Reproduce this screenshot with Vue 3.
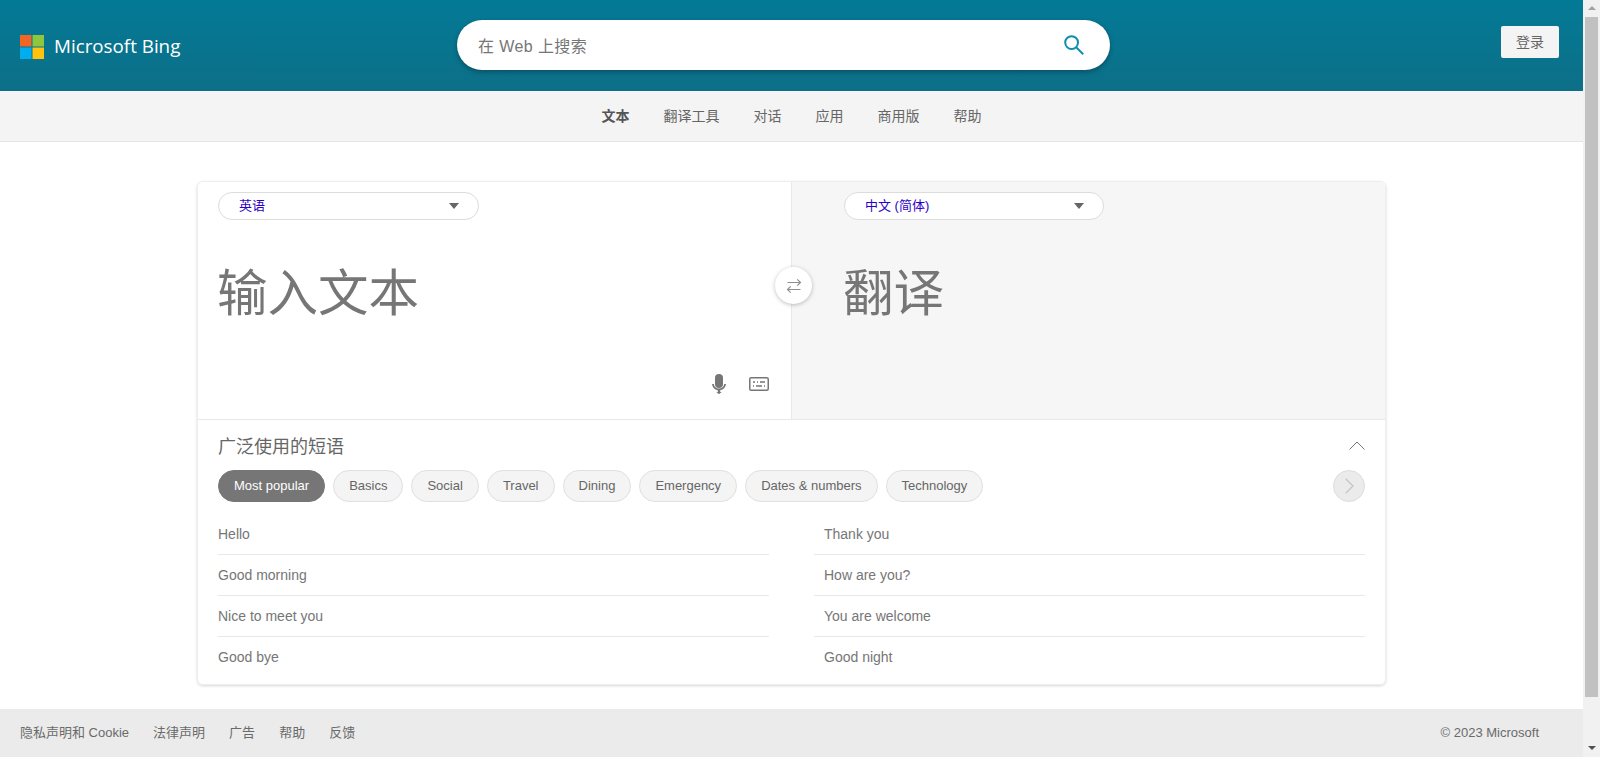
<script setup>
const navItems = ['文本', '翻译工具', '对话', '应用', '商用版', '帮助']
const chips = ['Most popular', 'Basics', 'Social', 'Travel', 'Dining', 'Emergency', 'Dates & numbers', 'Technology']
const leftPhrases = ['Hello', 'Good morning', 'Nice to meet you', 'Good bye']
const rightPhrases = ['Thank you', 'How are you?', 'You are welcome', 'Good night']
const footerLinks = ['隐私声明和 Cookie', '法律声明', '广告', '帮助', '反馈']
</script>

<template>
  <div class="window">
    <div class="page">
      <header class="header">
        <div class="brand">
          <svg class="logo" viewBox="0 0 24 24" width="24" height="24">
            <rect x="0" y="0" width="11.5" height="11.5" fill="#f26522" />
            <rect x="12.5" y="0" width="11.5" height="11.5" fill="#8dc63f" />
            <rect x="0" y="12.5" width="11.5" height="11.5" fill="#00aeef" />
            <rect x="12.5" y="12.5" width="11.5" height="11.5" fill="#ffc20e" />
          </svg>
          <span class="brand-name">Microsoft Bing</span>
        </div>
        <div class="search">
          <span class="search-text">在 Web 上搜索</span>
          <svg class="search-icon" viewBox="0 0 20 20" width="20" height="20" fill="none" stroke="#0e8fae" stroke-width="2">
            <circle cx="7.6" cy="7.6" r="6.4" />
            <path d="M12.2 12.2 19.2 19.2" />
          </svg>
        </div>
        <button class="login">登录</button>
      </header>

      <nav class="nav">
        <a v-for="(item, i) in navItems" :key="item" class="nav-item" :class="{ active: i === 0 }">{{ item }}</a>
      </nav>

      <main class="main">
        <section class="card">
          <div class="panels">
            <div class="panel source">
              <div class="lang">
                <span>英语</span>
                <i class="caret"></i>
              </div>
              <div class="big-text">输入文本</div>
              <div class="tools">
                <svg viewBox="0 0 14 20" width="14" height="20" fill="#767676">
                  <rect x="3" y="0" width="8" height="14" rx="4" />
                  <path d="M0 10h1.800c.3 2.800 2.300 4.500 5.200 4.500s4.900-1.700 5.200-4.500H14c-.3 3.400-2.600 5.700-5.800 6.200V18h1.500L7 20.200 4.300 18h1.500v-1.800C2.600 15.700.3 13.400 0 10z" />
                </svg>
                <svg viewBox="0 0 20 14" width="20" height="14" fill="none" stroke="#767676">
                  <rect x="0.75" y="0.75" width="18.500" height="12.500" rx="1.500" stroke-width="1.500" />
                  <path d="M4 5h2M8 5h1M11 5h5M4 9h1M7 9h6M15 9h1" stroke-width="1.500" />
                </svg>
              </div>
              <button class="swap">
                <svg viewBox="0 0 16 16" width="16" height="16" fill="none" stroke="#8f8f8f" stroke-width="1.200">
                  <path d="M1.500 4.500H14.500M11.300 1.300l3.200 3.200-3.200 3.200M14.500 11.500H1.500M4.700 8.300l-3.200 3.200 3.200 3.200" />
                </svg>
              </button>
            </div>
            <div class="panel target">
              <div class="lang">
                <span>中文 (简体)</span>
                <i class="caret"></i>
              </div>
              <div class="big-text">翻译</div>
            </div>
          </div>

          <div class="phrases">
            <div class="phrases-head">
              <h2 class="phrases-title">广泛使用的短语</h2>
              <svg viewBox="0 0 16 9" width="16" height="9" fill="none" stroke="#767676">
                <path d="M.5 8.500 8 1l7.500 7.500" />
              </svg>
            </div>
            <div class="chips-row">
              <div class="chips">
                <span v-for="(chip, i) in chips" :key="chip" class="chip" :class="{ selected: i === 0 }">{{ chip }}</span>
              </div>
              <button class="chip-next">
                <svg viewBox="0 0 9 16" width="9" height="16" fill="none" stroke="#c4c4c4" stroke-width="1.300">
                  <path d="M.7.700 8 8 .7 15.300" />
                </svg>
              </button>
            </div>
            <div class="phrase-cols">
              <ul class="phrase-list">
                <li v-for="p in leftPhrases" :key="p">{{ p }}</li>
              </ul>
              <ul class="phrase-list right">
                <li v-for="p in rightPhrases" :key="p">{{ p }}</li>
              </ul>
            </div>
          </div>
        </section>
      </main>

      <footer class="footer">
        <div class="footer-links">
          <a v-for="link in footerLinks" :key="link">{{ link }}</a>
        </div>
        <span class="copyright">© 2023 Microsoft</span>
      </footer>
    </div>

    <div class="scrollbar">
      <i class="arrow up"></i>
      <div class="thumb"></div>
      <i class="arrow down"></i>
    </div>
  </div>
</template>

<style scoped>
.window {
  display: flex;
  height: 757px;
  overflow: hidden;
  font-family: "Liberation Sans", "Noto Sans CJK SC", sans-serif;
  font-size: 14px;
  color: #666;
}

.page {
  flex: 1;
  min-width: 0;
  display: flex;
  flex-direction: column;
}

.header {
  height: 91px;
  flex: none;
  display: flex;
  align-items: flex-start;
  padding: 20px 24px 0 20px;
  box-sizing: border-box;
  background: linear-gradient(#037a97, #0d6f87);
}

.brand {
  width: 437px;
  flex: none;
  display: flex;
  align-items: center;
  margin-top: 15px;
  height: 24px;
}

.logo {
  flex: none;
}

.brand-name {
  margin: 0 0 2px 10px;
  font-family: "Open Sans", sans-serif;
  font-size: 18.8px;
  color: #fff;
}

.search {
  width: 653px;
  height: 50px;
  flex: none;
  display: flex;
  align-items: center;
  justify-content: space-between;
  padding: 0 26px 0 21px;
  box-sizing: border-box;
  background: #fff;
  border-radius: 25px;
  box-shadow: 0 2px 5px rgba(0, 0, 0, .3);
}

.search-text {
  font-size: 16px;
  letter-spacing: .4px;
  color: #767676;
}

.login {
  width: 58px;
  height: 32px;
  margin: 6px 0 0 auto;
  padding: 0 0 3px;
  border: none;
  border-radius: 2px;
  background: #f4f4f4;
  font: inherit;
  color: #666;
}

.nav {
  height: 51px;
  flex: none;
  box-sizing: border-box;
  display: flex;
  align-items: center;
  justify-content: center;
  gap: 34px;
  padding-bottom: 2px;
  background: #f4f4f4;
  border-bottom: 1px solid #e3e3e3;
}

.nav-item.active {
  font-weight: bold;
  color: #555;
}

.main {
  flex: 1;
  padding: 39px 197px 0;
}

.card {
  height: 504px;
  box-sizing: border-box;
  border: 1px solid #eee;
  border-radius: 6px;
  box-shadow: 0 1px 3px rgba(0, 0, 0, .16);
  display: flex;
  flex-direction: column;
}

.panels {
  height: 237px;
  flex: none;
  display: flex;
  border-bottom: 1px solid #e8e8e8;
}

.panel {
  position: relative;
  display: flex;
  flex-direction: column;
  box-sizing: border-box;
}

.source {
  width: 593px;
  padding: 10px 0 0 20px;
}

.target {
  flex: 1;
  padding: 10px 0 0 52px;
  background: #f6f6f6;
  border-left: 1px solid #e8e8e8;
  border-top-right-radius: 6px;
}

.lang {
  width: 261px;
  height: 28px;
  flex: none;
  box-sizing: border-box;
  display: flex;
  align-items: center;
  justify-content: space-between;
  padding: 0 19px 4px 20px;
  background: #fff;
  border: 1px solid #dcdcdc;
  border-radius: 14px;
  font-size: 13px;
  color: #2a00c8;
}

.target .lang {
  width: 260px;
}

.caret {
  width: 0;
  height: 0;
  margin-top: 4px;
  border-left: 5px solid transparent;
  border-right: 5px solid transparent;
  border-top: 6px solid #666;
}

.big-text {
  margin: 44px 0 0 -1px;
  font-size: 50.5px;
  line-height: 60px;
  color: #767676;
}

.tools {
  margin-top: auto;
  padding: 0 22px 25px 0;
  display: flex;
  justify-content: flex-end;
  align-items: center;
  gap: 23px;
}

.swap {
  position: absolute;
  top: 85px;
  right: -21px;
  z-index: 1;
  width: 37px;
  height: 37px;
  padding: 0;
  display: flex;
  align-items: center;
  justify-content: center;
  background: #fff;
  border: none;
  border-radius: 50%;
  box-shadow: 0 1px 4px rgba(0, 0, 0, .25);
}

.phrases {
  flex: 1;
  padding: 0 20px;
}

.phrases-head {
  height: 50px;
  display: flex;
  align-items: center;
  justify-content: space-between;
}

.phrases-title {
  margin: 0;
  font-size: 18px;
  font-weight: normal;
  color: #666;
}

.chips-row {
  display: flex;
  justify-content: space-between;
}

.chips {
  display: flex;
  gap: 8px;
}

.chip {
  height: 32px;
  box-sizing: border-box;
  padding: 0 15px 1px;
  display: flex;
  align-items: center;
  background: #f4f4f4;
  border: 1px solid #e0e0e0;
  border-radius: 16px;
  font-size: 13px;
  color: #666;
}

.chip.selected {
  background: #767676;
  border-color: #767676;
  color: #fff;
}

.chip-next {
  width: 32px;
  height: 32px;
  padding: 0;
  display: flex;
  align-items: center;
  justify-content: center;
  background: #ebebeb;
  border: 1px solid #ddd;
  border-radius: 50%;
}

.phrase-cols {
  display: flex;
  gap: 45px;
  margin-top: 12px;
}

.phrase-list {
  flex: 1;
  margin: 0;
  padding: 0;
  list-style: none;
  color: #767676;
}

.phrase-list li {
  height: 41px;
  box-sizing: border-box;
  display: flex;
  align-items: center;
  border-bottom: 1px solid #e8e8e8;
}

.phrase-list.right li {
  padding-left: 10px;
}

.phrase-list li:last-child {
  height: 39px;
  border-bottom: none;
}

.footer {
  height: 48px;
  flex: none;
  box-sizing: border-box;
  display: flex;
  align-items: center;
  justify-content: space-between;
  padding: 0 44px 0 20px;
  background: #ebebeb;
  font-size: 13px;
  color: #6a6a6a;
}

.footer-links {
  display: flex;
  gap: 24px;
  margin-bottom: 3px;
}

.copyright {
  margin-bottom: 1px;
}

.scrollbar {
  width: 17px;
  flex: none;
  position: relative;
  display: flex;
  flex-direction: column;
  align-items: center;
  background: #f1f1f1;
}

.thumb {
  width: 13px;
  height: 680px;
  background: #c1c1c1;
}

.arrow {
  width: 0;
  height: 0;
  border-left: 4px solid transparent;
  border-right: 4px solid transparent;
}

.arrow.up {
  margin: 6px 0 7px;
  border-bottom: 4px solid #a3a3a3;
}

.arrow.down {
  margin-top: 49px;
  border-top: 4px solid #505050;
}
</style>

<style>
body {
  margin: 0;
  overflow: hidden;
}
</style>
